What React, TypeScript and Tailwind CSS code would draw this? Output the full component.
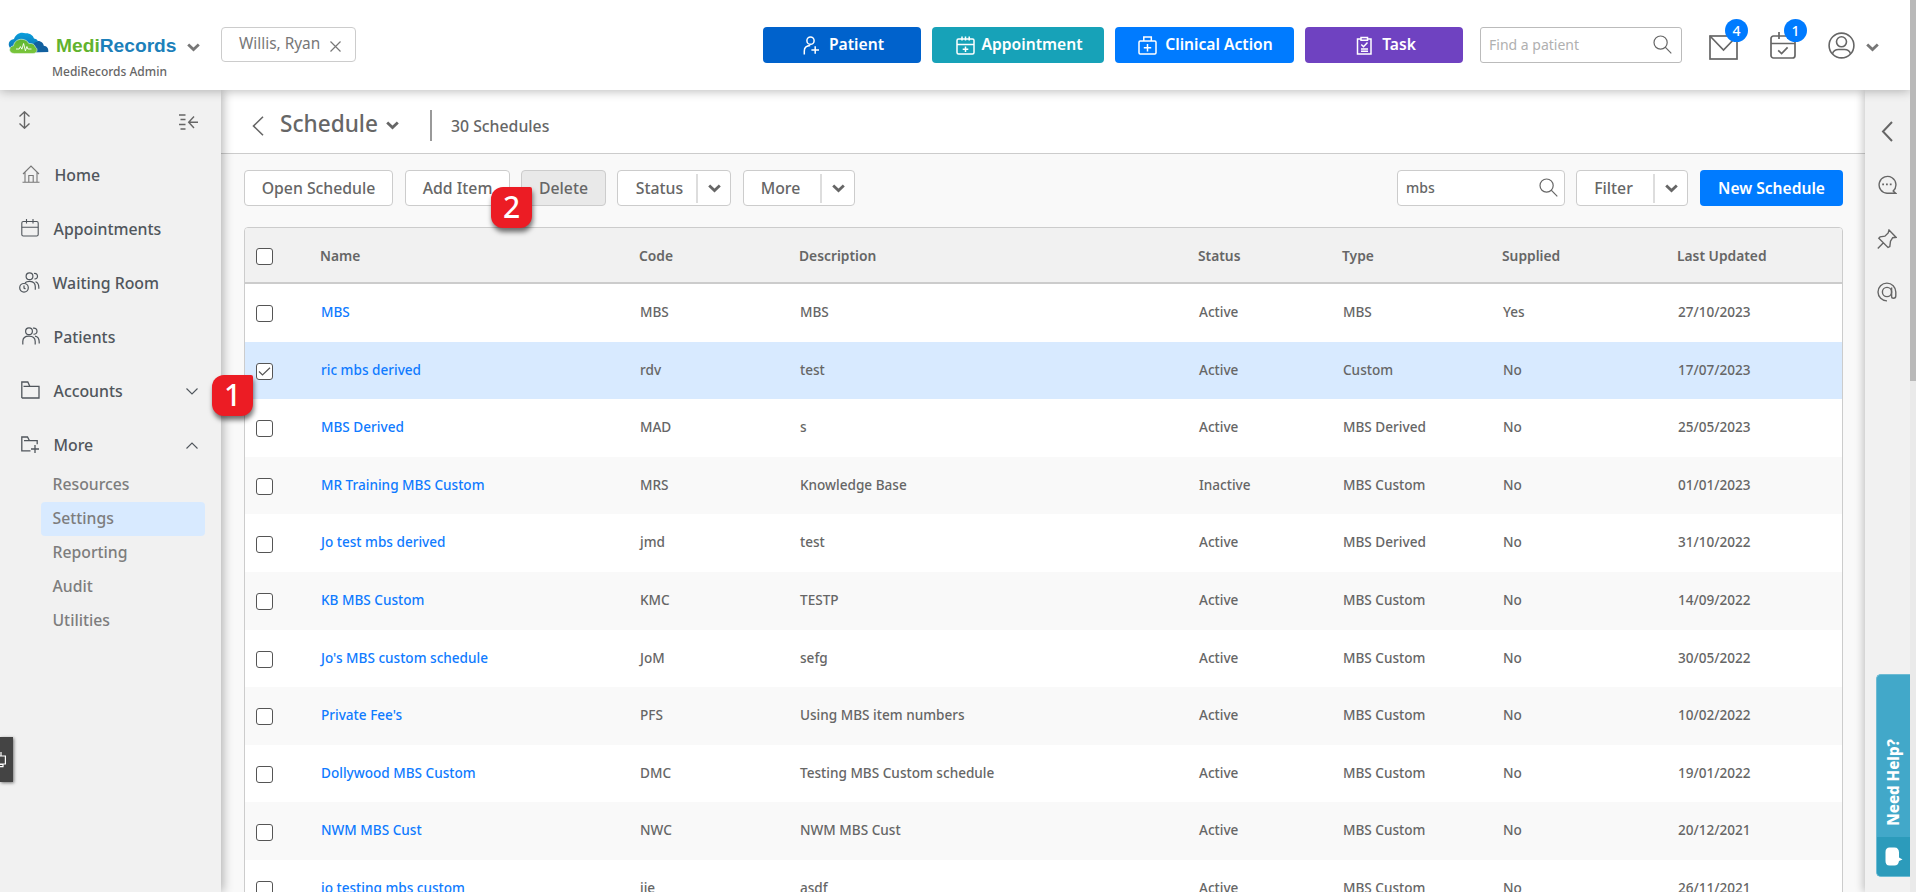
import type { ReactNode } from "react";

type Schedule = {
  name: string;
  code: string;
  description: string;
  status: string;
  type: string;
  supplied: string;
  updated: string;
  selected?: boolean;
};

const schedules: Schedule[] = [
  { name: "MBS", code: "MBS", description: "MBS", status: "Active", type: "MBS", supplied: "Yes", updated: "27/10/2023" },
  { name: "ric mbs derived", code: "rdv", description: "test", status: "Active", type: "Custom", supplied: "No", updated: "17/07/2023", selected: true },
  { name: "MBS Derived", code: "MAD", description: "s", status: "Active", type: "MBS Derived", supplied: "No", updated: "25/05/2023" },
  { name: "MR Training MBS Custom", code: "MRS", description: "Knowledge Base", status: "Inactive", type: "MBS Custom", supplied: "No", updated: "01/01/2023" },
  { name: "Jo test mbs derived", code: "jmd", description: "test", status: "Active", type: "MBS Derived", supplied: "No", updated: "31/10/2022" },
  { name: "KB MBS Custom", code: "KMC", description: "TESTP", status: "Active", type: "MBS Custom", supplied: "No", updated: "14/09/2022" },
  { name: "Jo's MBS custom schedule", code: "JoM", description: "sefg", status: "Active", type: "MBS Custom", supplied: "No", updated: "30/05/2022" },
  { name: "Private Fee's", code: "PFS", description: "Using MBS item numbers", status: "Active", type: "MBS Custom", supplied: "No", updated: "10/02/2022" },
  { name: "Dollywood MBS Custom", code: "DMC", description: "Testing MBS Custom schedule", status: "Active", type: "MBS Custom", supplied: "No", updated: "19/01/2022" },
  { name: "NWM MBS Cust", code: "NWC", description: "NWM MBS Cust", status: "Active", type: "MBS Custom", supplied: "No", updated: "20/12/2021" },
  { name: "jo testing mbs custom", code: "jje", description: "asdf", status: "Active", type: "MBS Custom", supplied: "No", updated: "26/11/2021" },
];

const GRID = "grid grid-cols-[75px_319px_160px_399px_144px_160px_175px_1fr]";

function Svg({ w, h, box, sw = 1.3, className = "", children }: { w: number; h: number; box?: string; sw?: number; className?: string; children: ReactNode }) {
  return (
    <svg width={w} height={h} viewBox={box ?? `0 0 ${w} ${h}`} fill="none" stroke="currentColor" strokeWidth={sw} className={`block shrink-0 ${className}`}>
      {children}
    </svg>
  );
}

function Chevron({ className = "" }: { className?: string }) {
  return (
    <Svg w={13} h={9} sw={2.8} className={className}>
      <path d="M1.2 1.5 6.5 6.6 11.8 1.5" />
    </Svg>
  );
}

function SearchIcon() {
  return (
    <Svg w={19} h={19} sw={1.2}>
      <circle cx="7.6" cy="7.6" r="6.6" />
      <path d="M12.2 12.2 18.3 18.3" />
    </Svg>
  );
}

function Logo() {
  return (
    <svg width="41" height="23" viewBox="0 0 41 23" className="block shrink-0">
      <defs>
        <linearGradient id="sky" x1="0" y1="0" x2="0" y2="1">
          <stop offset="0" stopColor="#0a9fdc" />
          <stop offset="1" stopColor="#0d74b4" />
        </linearGradient>
        <linearGradient id="leaf" x1="0" y1="0" x2="0" y2="1">
          <stop offset="0" stopColor="#5cb531" />
          <stop offset="1" stopColor="#7cc63c" />
        </linearGradient>
      </defs>
      <path d="M22 20.500C22 13 25 9 30 9c3.500 0 5.500 2.400 5.800 4.800 2.800.3 4.900 2.200 4.500 6.200z" fill="#12609f" />
      <path d="M3 17C-.5 14-.3 8 6 7 7.500 2.500 12-.5 17.500 1.300 21 .8 25 3 26 6.500c2.500.3 3.500 1.500 4 3-4 .5-5 3-5.200 5.500z" fill="url(#sky)" />
      <path d="M6.500 21.500C2.500 21.500 1.500 19 1.700 17.300 2 15 3.500 14 5.500 13.900 6 9.500 10 7 14 7.300c3.200.2 5.800 1.800 6.800 4.300 3.500-.6 6 .9 6.400 3.300 1.300.8 1.900 2 1.800 3.400-.1 2-1.800 3.200-4 3.200z" fill="url(#leaf)" stroke="#e6f6ea" strokeWidth="0.600" />
      <path d="M8 17h3.200l1.200-2.400 1.500 2.600 1.700-5.700 1.800 7.300 1.500-4.300 1 2.500h3.600" fill="none" stroke="#fff" strokeWidth="0.900" />
    </svg>
  );
}

function ActionButton({ label, icon, className }: { label: string; icon: ReactNode; className: string }) {
  return (
    <button className={`flex h-9 items-center justify-center rounded-[4px] pl-[2px] text-[15.650px] font-semibold text-white ${className}`}>
      {icon}
      <span>{label}</span>
    </button>
  );
}

function Header() {
  return (
    <header className="relative z-20 flex h-[90px] shrink-0 bg-white text-[#666] shadow-[0_1px_10px_rgba(0,0,0,0.28)]">
      <div className="flex w-[221px] flex-col pt-8 pl-2">
        <div className="flex h-[27px] items-start">
          <Logo />
          <div className="ml-[7px] w-[122px] pt-[2px] font-['Liberation_Sans',sans-serif] text-[19.200px] leading-[24px] font-bold whitespace-nowrap">
            <span className="text-[#62b32e]">Medi</span>
            <span className="text-[#1c80ba]">Records</span>
          </div>
          <Chevron className="mt-[11px] ml-[9px] text-[#777]" />
        </div>
        <div className="mt-[4px] ml-[44px] text-[12px] leading-[18px] font-medium text-[#666]">MediRecords Admin</div>
      </div>
      <div className="mt-[27px] flex h-[35px] w-[135px] items-center rounded-[4px] border border-[#ccc] pl-[17px] text-[15.400px] text-[#777]">
        <span className="relative -top-px w-[91px] whitespace-nowrap">Willis, Ryan</span>
        <Svg w={11} h={11} sw={1.2} className="mt-[3px]">
          <path d="M.5.5l10 10M10.500.5l-10 10" />
        </Svg>
      </div>
      <div className="mt-[27px] ml-auto flex h-9">
        <ActionButton
          label="Patient"
          className="w-[158px] bg-[#0062cc]"
          icon={
            <Svg w={17} h={19} sw={1.5} className="mt-px mr-[9px] ml-px">
              <circle cx="7.500" cy="4.700" r="3.600" />
              <path d="M1.300 18.500v-3.500c0-3.200 2.500-5.200 6-5.400M12.200 10.200v7.600M8.400 14h7.600" />
            </Svg>
          }
        />
        <ActionButton
          label="Appointment"
          className="ml-[11px] w-[172px] bg-[#17a2b8]"
          icon={
            <Svg w={19} h={19} sw={1.5} className="mt-px mr-[7px]">
              <rect x="1" y="3" width="17" height="15" rx="1.500" />
              <path d="M1 8.500h17M6 .5v4M9.500 .5v4M13.200 .5v4M9.500 10.500v5.500M6.700 13.200h5.600" />
            </Svg>
          }
        />
        <ActionButton
          label="Clinical Action"
          className="ml-[11px] w-[179px] bg-[#007bff]"
          icon={
            <Svg w={19} h={19} sw={1.5} className="mt-px mr-[8px]">
              <rect x="1" y="5" width="17" height="13" rx="1.200" />
              <path d="M5.800 5V1h7.500v4M9.500 8v7.400M5.800 11.700h7.400" />
            </Svg>
          }
        />
        <ActionButton
          label="Task"
          className="ml-[11px] w-[158px] bg-[#6f42c1]"
          icon={
            <Svg w={17} h={19} sw={1.500} className="mt-px mr-[9px] ml-[2px]">
              <path d="M5 3H1.500v15h13.500V3H11.500M5 1.500h6.500v2.800H5zM5.300 8.500l2.200 2.200 4-4.200M5 13h7M5 15.300h7" />
            </Svg>
          }
        />
        <label className="ml-[17px] flex h-9 w-[202px] items-center justify-between rounded-[3px] border border-[#bbb] pr-[9px] pl-2 text-[#666]">
          <input className="relative -top-px w-[150px] bg-transparent text-[14px] outline-none placeholder:text-[#b0b0b0]" placeholder="Find a patient" />
          <span className="relative -top-px">
            <SearchIcon />
          </span>
        </label>
      </div>
      <div className="flex w-[228px] pt-8">
        <div className="relative ml-[27px] h-7 w-[29px] pt-[3px]">
          <Svg w={29} h={25} sw={1.700}>
            <rect x="1" y="1" width="27" height="23" />
            <path d="M1 1l13.500 14L28 1" />
          </Svg>
          <span className="absolute -top-[13px] left-[16px] flex size-[23px] items-center justify-center rounded-full bg-[#007bff] text-[14px] font-medium text-white">4</span>
        </div>
        <div className="relative ml-[32px] h-7 w-[26px]">
          <Svg w={26} h={27} sw={1.700}>
            <rect x="1" y="4" width="24" height="22" rx="2.500" />
            <path d="M1 11.500h24M9 0v7M18 0v7M8.200 18.300l3.400 3.300 6-6.200" />
          </Svg>
          <span className="absolute -top-[13px] left-[14px] flex size-[23px] items-center justify-center rounded-full bg-[#007bff] text-[14px] font-medium text-white">1</span>
        </div>
        <Svg w={27} h={27} sw={1.600} className="ml-[32px]">
          <circle cx="13.500" cy="13.500" r="12.400" />
          <circle cx="13.500" cy="9.800" r="5" />
          <path d="M4.500 21.800c1-3.500 3.500-4.300 6-4.300h6c2.500 0 5 .8 6 4.300" />
        </Svg>
        <Chevron className="mt-[11px] ml-[11px] text-[#777]" />
      </div>
    </header>
  );
}

const icons = {
  home: (
    <Svg w={18} h={18} sw={1.1} className="text-[#777]">
      <path d="M1 9 9 1l8 8M3 7.500v9.500M15 7.500v9.500M.5 17.200h17M6.800 17v-6.500h4.400V17" />
    </Svg>
  ),
  calendar: (
    <Svg w={18} h={18} sw={1.1}>
      <rect x=".8" y="2.500" width="16.400" height="14.500" rx="1.500" />
      <path d="M.8 8.200h16.400M5.500 0v4.500M12 0v4.500" />
    </Svg>
  ),
  waiting: (
    <Svg w={21} h={21} sw={1.2}>
      <circle cx="10.500" cy="4.300" r="3.400" />
      <path d="M15 1.500c2.200-.4 3.500.8 3.500 2.700s-1.300 3-3 2.700M6 10.800c1.500-1.200 3-1.500 5-1.400 3.500.2 5.300 2.100 5.300 5.300v3M16.500 9.700c2.300.8 3.300 2.500 3.300 5.500v1.500" />
      <circle cx="5" cy="15.800" r="4.300" />
      <path d="M5 13.500v2.600l1.500.8" />
    </Svg>
  ),
  people: (
    <Svg w={18} h={18} sw={1.2}>
      <circle cx="7" cy="4.200" r="3.400" />
      <path d="M11 1.200c2.500-.5 4 .8 4 3s-1.800 3.300-3.500 3M.8 17.500v-3c0-3.400 2.200-5.300 6.200-5.300s6.200 1.900 6.200 5.300v3M13 9.200c3 .5 4.200 2.500 4.200 5.800v1.500" />
    </Svg>
  ),
  folder: (
    <Svg w={19} h={18} sw={1.300}>
      <path d="M.8 17V1h6l2 4.300M2.500 5.300h15.500V17H.8" />
    </Svg>
  ),
  folderPlus: (
    <Svg w={18} h={17} sw={1.300}>
      <path d="M9.500 14.800H.8V1h5.700l2 3.700h7.700v3.500M3 4.700h6M14 9v8M10 13h8" />
    </Svg>
  ),
};

function NavItem({ icon, label, left, chevron }: { icon: ReactNode; label: string; left: string; chevron?: "down" | "up" }) {
  return (
    <a className="flex h-[54px] items-center text-[15.850px] font-medium text-[#50565c]">
      <span className={`flex shrink-0 pb-[2px] ${left}`}>{icon}</span>
      <span className="pt-[2px] pl-[0.500px] whitespace-nowrap">{label}</span>
      {chevron && (
        <Svg w={12} h={7} sw={1.1} className="mr-[23px] ml-auto">
          <path d={chevron === "down" ? "M.5.5 6 6 11.500.5" : "M.5 6.500 6 1l5.500 5.500"} />
        </Svg>
      )}
    </a>
  );
}

function Sidebar() {
  return (
    <aside className="relative z-10 w-[221px] shrink-0 bg-[#f1f1f1] text-[#666] shadow-[2px_0_10px_rgba(0,0,0,0.3)]">
      <div className="flex h-[58px] justify-between pt-[21px] pr-[23px] pl-[19px]">
        <Svg w={11} h={18} sw={1.400}>
          <path d="M5.500 1v16M.5 5.500l5-4.700 5 4.700M.5 12.500l5 4.700 5-4.700" />
        </Svg>
        <Svg w={19} h={16} sw={1.400} className="mt-[3px]">
          <path d="M0 1h6.500M1.500 5.500h5M0 10.500h6.500M1.500 15h5M10 8.200h9M15 2.500 9.700 8.200 15 14" />
        </Svg>
      </div>
      <nav>
        <NavItem icon={icons.home} label="Home" left="w-[54px] pl-[22px]" />
        <NavItem icon={icons.calendar} label="Appointments" left="w-[53px] pl-[21px]" />
        <NavItem icon={icons.waiting} label="Waiting Room" left="w-[52px] pl-[19px]" />
        <NavItem icon={icons.people} label="Patients" left="w-[53px] pl-[22px]" />
        <NavItem icon={icons.folder} label="Accounts" left="w-[53px] pl-[21px]" chevron="down" />
        <NavItem icon={icons.folderPlus} label="More" left="w-[53px] pl-[21px]" chevron="up" />
        <div className="-mt-[4px] ml-[41px] w-[164px] text-[15.750px] font-medium text-[#7d7d7d]">
          {["Resources", "Settings", "Reporting", "Audit", "Utilities"].map((label) => (
            <a key={label} className={`flex h-[33.800px] items-center rounded-[4px] pt-[0.600px] pl-[11.500px] ${label === "Settings" ? "bg-[#d8eaff]" : ""}`}>
              {label}
            </a>
          ))}
        </div>
      </nav>
    </aside>
  );
}

function SplitButton({ label, className, labelClass }: { label: string; className: string; labelClass: string }) {
  return (
    <button className={`flex h-9 items-center rounded-[4px] border border-[#ccc] bg-white ${className}`}>
      <span className={`pt-px text-center ${labelClass}`}>{label}</span>
      <span className="flex h-[29px] flex-1 items-center justify-center border-l-2 border-[#ddd]">
        <Chevron />
      </span>
    </button>
  );
}

function Checkbox({ checked }: { checked?: boolean }) {
  return (
    <span className="flex size-[17px] items-center justify-center rounded-[3px] border border-[#555] bg-white text-[#555]">
      {checked && (
        <Svg w={13} h={9} sw={1.200}>
          <path d="M1 4.500 4.500 8 12 .8" />
        </Svg>
      )}
    </span>
  );
}

function ScheduleTable() {
  return (
    <div className="mt-[21px] h-[700px] w-[1599px] rounded-t-[4px] border border-[#ccc] bg-white text-[#666]">
      <div className={`${GRID} h-[56px] items-center rounded-t-[3px] border-b-2 border-[#ccc] bg-[#f1f1f1] text-[13.800px] font-semibold`}>
        <span className="mt-[3px] pl-[11px]">
          <Checkbox />
        </span>
        {["Name", "Code", "Description", "Status", "Type", "Supplied", "Last Updated"].map((h) => (
          <span key={h} className="pt-[2px]">
            {h}
          </span>
        ))}
      </div>
      {schedules.map((s, i) => (
        <div
          key={s.name}
          className={`${GRID} h-[57.600px] items-center pb-[1.200px] text-[13.580px] font-medium ${s.selected ? "bg-[#d8eaff]" : i % 2 ? "bg-[#f9f9f9]" : "bg-white"}`}
        >
          <span className="mt-[3px] pl-[11px]">
            <Checkbox checked={s.selected} />
          </span>
          <a className="pl-px text-[#0f7bff]">{s.name}</a>
          <span className="pl-px">{s.code}</span>
          <span className="pl-px">{s.description}</span>
          <span className="pl-px">{s.status}</span>
          <span className="pl-px">{s.type}</span>
          <span className="pl-px">{s.supplied}</span>
          <span className="pl-px">{s.updated}</span>
        </div>
      ))}
    </div>
  );
}

function Main() {
  const button = "flex h-9 items-center justify-center rounded-[4px] border border-[#ccc] pt-px";
  return (
    <main className="h-[802px] min-w-0 flex-1 overflow-hidden bg-[#f9f9f9] text-[#666]">
      <div className="flex h-16 items-center border-b border-[#ccc] bg-white pl-[31px]">
        <Svg w={12} h={20} sw={1.600} className="mt-[9px]">
          <path d="M11 .8 1.500 10l9.500 9.200" />
        </Svg>
        <h1 className="mt-[5px] ml-[16px] w-[106px] text-[22.600px] leading-[30px] font-medium">Schedule</h1>
        <Chevron className="mt-[7px]" />
        <span className="mt-[8px] ml-[31px] h-[31px] w-[2px] bg-[#999]" />
        <span className="mt-[10px] ml-[19px] text-[15.800px] font-medium">30 Schedules</span>
      </div>
      <div className="pt-4 pl-[23px]">
        <div className="flex w-[1599px] text-[15.800px] font-medium">
          <button className={`${button} w-[149px] bg-white`}>Open Schedule</button>
          <button className={`${button} ml-3 w-[105px] bg-white`}>Add Item</button>
          <button className={`${button} ml-[11px] w-[85px] bg-[#e9e9e9]`}>Delete</button>
          <SplitButton label="Status" className="ml-[11px] w-[114px]" labelClass="w-[78px] pl-[5px]" />
          <SplitButton label="More" className="ml-3 w-[112px]" labelClass="w-[76px] pr-[3px]" />
          <label className="ml-auto flex h-9 w-[168px] items-center justify-between rounded-[4px] border border-[#ccc] bg-white pr-[6px] pl-2">
            <input className="relative -top-px w-[100px] bg-transparent text-[14px] font-medium outline-none" defaultValue="mbs" />
            <span className="relative -top-px">
              <SearchIcon />
            </span>
          </label>
          <SplitButton label="Filter" className="ml-[11px] w-[112px]" labelClass="w-[76px] pr-[3px]" />
          <button className="ml-3 h-9 w-[143px] rounded-[4px] bg-[#007bff] pt-px text-[15.600px] font-semibold text-white">New Schedule</button>
        </div>
        <ScheduleTable />
      </div>
    </main>
  );
}

function Rail() {
  return (
    <aside className="relative z-10 flex w-[45px] shrink-0 flex-col items-center bg-[#f1f1f1] pt-[31px] text-[#666] shadow-[-2px_0_8px_rgba(0,0,0,0.22)]">
      <div className="flex w-full flex-col items-center pr-px">
        <Svg w={12} h={21} sw={2}>
          <path d="M11 1 2 10.500 11 20" />
        </Svg>
        <Svg w={20} h={20} sw={1.400} className="mt-[33px]">
          <path d="M16.200 16A8.400 8.400 0 1 0 10 18.200h8.700z" />
          <path d="M5.200 9.300h1.800M9 9.300h1.800M12.800 9.300h1.800" strokeWidth="1.800" />
        </Svg>
        <Svg w={20} h={20} sw={1.400} className="mt-[34px]">
          <path d="M12 1l7 7.300-3.300.4-2.200 3.500-.7 5.300-1.800 1L1.800 9.300l1.300-1.500 4.800-.6 3.300-3.300zM6.400 13.800.8 19.400" />
        </Svg>
        <Svg w={20} h={20} sw={1.400} className="mt-[33px]">
          <circle cx="10" cy="10" r="4.600" />
          <path d="M14.600 5.500v9c0 1.200.6 1.800 1.900 1.800s2.300-.8 2.300-2.500V10a8.900 8.900 0 1 0-8.800 8.900" />
        </Svg>
      </div>
      <div className="absolute top-[584px] right-0 flex h-[203px] w-[34px] flex-col overflow-hidden rounded-l-[5px] border border-r-0 border-[#6dbbd3] bg-[#42a8c9]">
        <div className="flex h-[162px] items-end justify-center pb-[11px]">
          <span className="rotate-180 text-[15.100px] leading-none font-extrabold text-white [writing-mode:vertical-rl]">Need Help?</span>
        </div>
        <div className="flex flex-1 items-center justify-center bg-[#2c9bbb]">
          <svg width="18" height="19" viewBox="0 0 18 19" className="block">
            <path d="M4.500.5h5c3 0 4.500 2 4.500 5v5l3.500 2-3.500 1.500c-.5 3-2 4.500-4.500 4.500h-5C1.500 18.500.5 16.500.5 14V5C.5 2 2 .5 4.500.5z" fill="#fff" />
          </svg>
        </div>
      </div>
    </aside>
  );
}

function StepMarker({ step, className }: { step: number; className: string }) {
  return (
    <div className={`absolute z-30 flex size-[41px] items-center justify-center rounded-[12px] rounded-tr-[2px] bg-[#ec1c24] pb-px text-[30px] leading-none font-medium text-white shadow-[1px_4px_5px_rgba(0,0,0,0.55)] ${className}`}>
      {step}
    </div>
  );
}

export default function App() {
  return (
    <div className="relative flex h-[892px] w-[1916px] overflow-hidden bg-white font-['Noto_Sans','Open_Sans',sans-serif]">
      <div className="flex w-[1910px] flex-col">
        <Header />
        <div className="flex h-[802px]">
          <Sidebar />
          <Main />
          <Rail />
        </div>
      </div>
      <div className="relative z-30 w-[6px] bg-[#eaeaea]">
        <div className="h-[381px] bg-[#b9b9b9]" />
      </div>
      <div className="absolute top-[737px] left-0 z-20 flex h-[45px] w-[13px] items-center bg-[#444] text-white shadow-[1px_1px_3px_rgba(0,0,0,0.5)]">
        <Svg w={7} h={16} sw={1.200}>
          <path d="M0 4h5.400v8H0M0 12.500h3v2.200H0M1 0v4" />
        </Svg>
      </div>
      <StepMarker step={1} className="top-[375px] left-[212px]" />
      <StepMarker step={2} className="top-[187px] left-[491px]" />
    </div>
  );
}
